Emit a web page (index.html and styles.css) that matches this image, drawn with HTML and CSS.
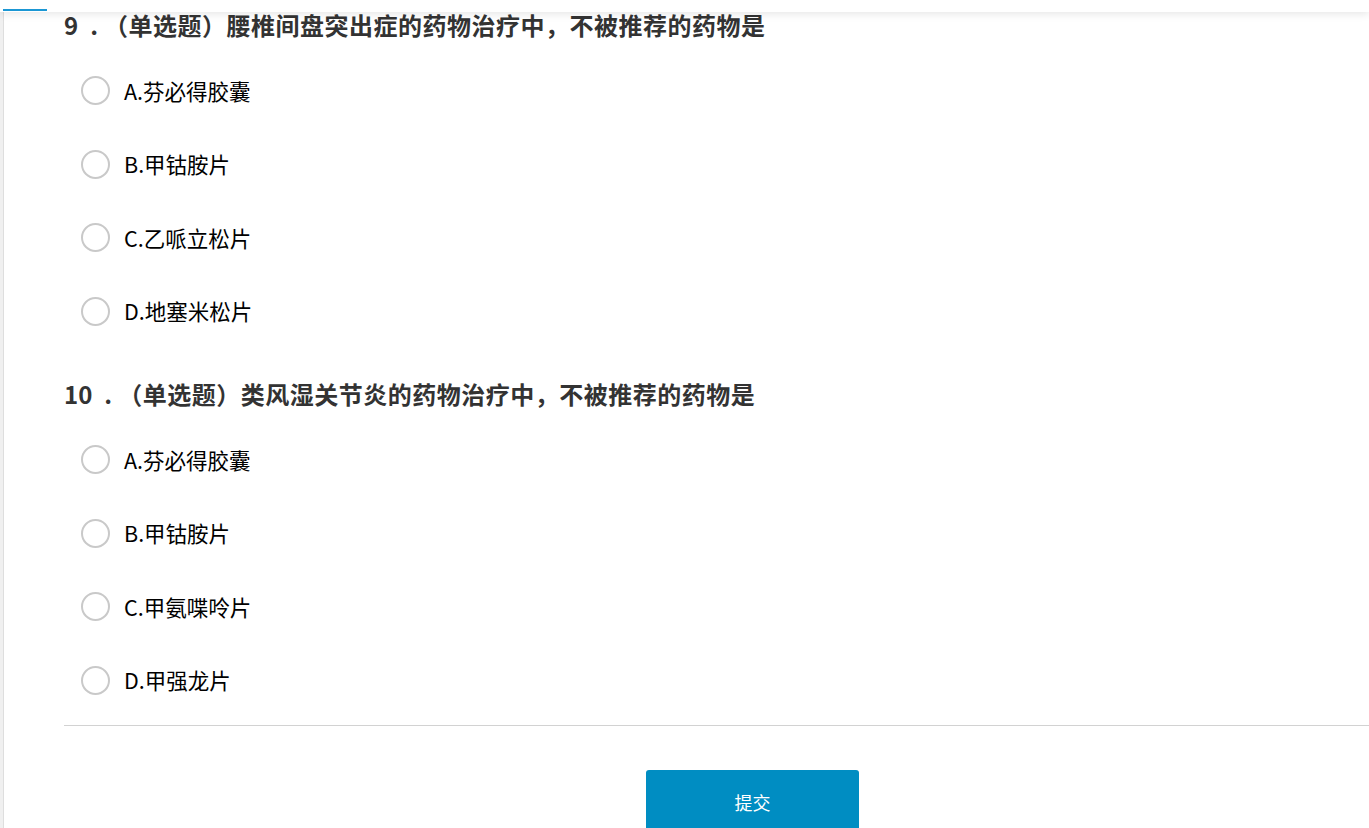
FILE: index.html
```html
<!DOCTYPE html>
<html lang="zh-CN">
<head>
<meta charset="utf-8">
<title>作业</title>
<link rel="stylesheet" href="styles.css">
</head>
<body>
<header class="topbar"><div class="tab-indicator"></div></header>
<div class="page">
  <div class="rail"></div>
  <main class="main">
    <section class="question">
      <h3 class="q-title"><span class="q-num">9</span><span class="q-dot">.</span>（单选题）腰椎间盘突出症的药物治疗中，不被推荐的药物是</h3>
      <ul class="options">
        <li class="option"><span class="radio"></span><span class="opt-text">A.芬必得胶囊</span></li>
        <li class="option"><span class="radio"></span><span class="opt-text">B.甲钴胺片</span></li>
        <li class="option"><span class="radio"></span><span class="opt-text">C.乙哌立松片</span></li>
        <li class="option"><span class="radio"></span><span class="opt-text">D.地塞米松片</span></li>
      </ul>
    </section>
    <section class="question">
      <h3 class="q-title"><span class="q-num">10</span><span class="q-dot">.</span>（单选题）类风湿关节炎的药物治疗中，不被推荐的药物是</h3>
      <ul class="options">
        <li class="option"><span class="radio"></span><span class="opt-text">A.芬必得胶囊</span></li>
        <li class="option"><span class="radio"></span><span class="opt-text">B.甲钴胺片</span></li>
        <li class="option"><span class="radio"></span><span class="opt-text">C.甲氨喋呤片</span></li>
        <li class="option"><span class="radio"></span><span class="opt-text">D.甲强龙片</span></li>
      </ul>
    </section>
    <div class="divider"></div>
    <div class="actions">
      <button class="submit" type="button">提交</button>
    </div>
  </main>
</div>
</body>
</html>
```

FILE: styles.css
```css
html, body {
  margin: 0;
  padding: 0;
  background: #ffffff;
  overflow: hidden;
  height: 828px;
}
body {
  font-family: "Noto Sans CJK SC", "Noto Sans", "Liberation Sans", sans-serif;
  color: #000;
}
.topbar {
  position: fixed;
  top: 0;
  left: 0;
  right: 0;
  height: 12px;
  background: #ffffff;
  box-shadow: 0 2px 8px rgba(0, 0, 0, 0.10);
  z-index: 10;
}
.tab-indicator {
  margin-top: 9px;
  margin-left: 3px;
  width: 44px;
  height: 2px;
  background: #1b97d4;
}
.page {
  display: flex;
  height: 828px;
}
.rail {
  flex: 0 0 3px;
  background: #f0f0f0;
  border-right: 1px solid #dedede;
}
.main {
  flex: 1 1 auto;
  min-width: 0;
  padding-left: 60px;
}
.question {
  margin-bottom: 28px;
}
.question:first-child {
  padding-top: 7px;
}
.question:last-of-type {
  margin-bottom: 8px;
}
.q-title {
  margin: 0;
  font-size: 24px;
  line-height: 36px;
  font-weight: 700;
  color: #333333;
  white-space: nowrap;
  letter-spacing: 0.5px;
}
.q-num {
  letter-spacing: 0;
}
.q-dot {
  display: inline-block;
  margin: 0 6px 0 12px;
  letter-spacing: 0;
}
.options {
  list-style: none;
  margin: 11px 0 0 0;
  padding: 0;
}
.option {
  height: 73.5px;
  display: flex;
  align-items: center;
  padding-left: 17px;
}
.radio {
  box-sizing: border-box;
  width: 29px;
  height: 29px;
  border: 2.4px solid #c9c9c9;
  border-radius: 50%;
  background: #fff;
  flex: 0 0 auto;
}
.opt-text {
  margin-left: 14px;
  font-size: 21.5px;
  line-height: 30px;
  color: #000;
}
.divider {
  height: 1px;
  background: #d2d2d2;
}
.actions {
  display: flex;
  justify-content: flex-start;
  padding-top: 44px;
  padding-left: 582px;
}
.submit {
  width: 213px;
  height: 64px;
  border: none;
  border-radius: 3px;
  background: #008dc2;
  color: #ffffff;
  font-family: "Noto Sans CJK SC", "Noto Sans", sans-serif;
  font-size: 18px;
  padding: 0;
  cursor: pointer;
}
```
